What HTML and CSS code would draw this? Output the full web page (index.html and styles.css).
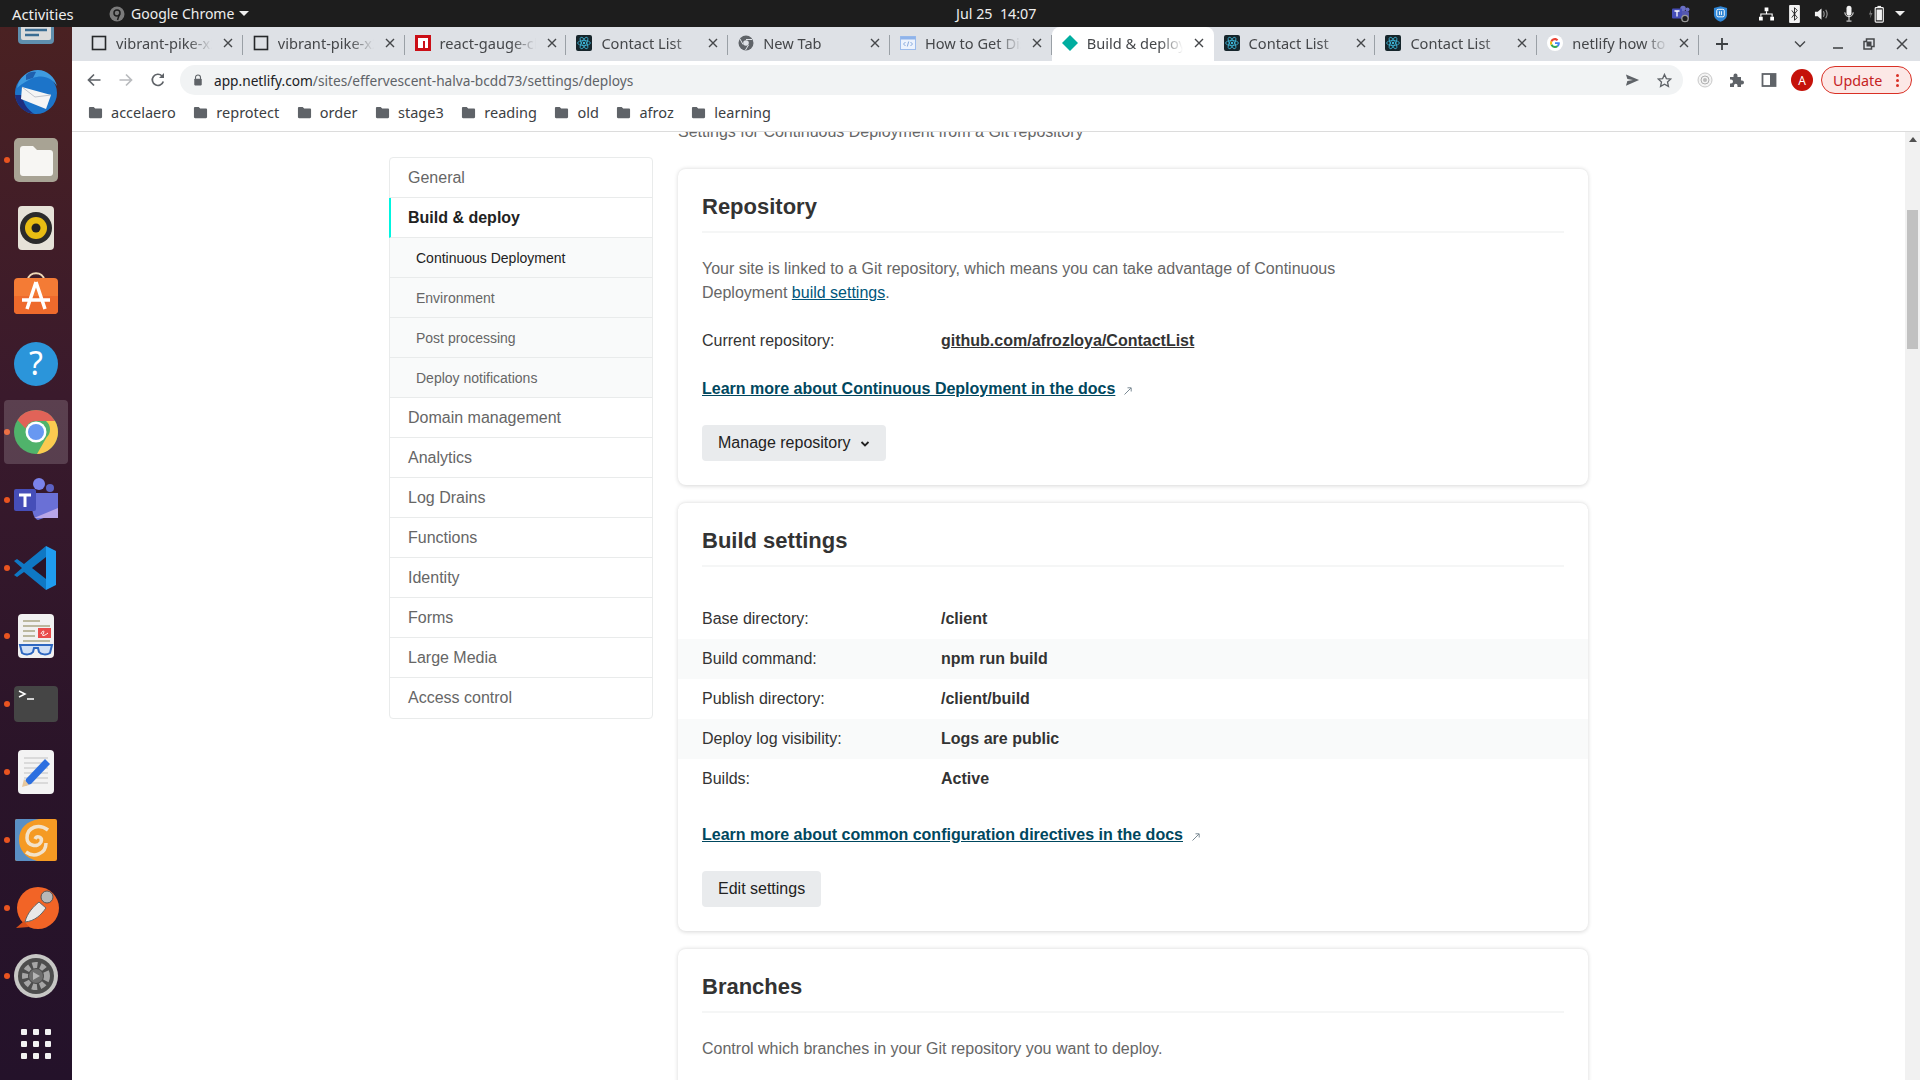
FILE: index.html
```html
<!DOCTYPE html>
<html lang="en">
<head>
  <meta charset="UTF-8">
  <title>Build &amp; deploy</title>
  <link rel="stylesheet" href="styles.css">
</head>
<body>
  <svg class="defs" width="0" height="0">
    <symbol id="react" viewBox="0 0 16 16">
      <rect width="16" height="16" rx="2" fill="#16252b"/>
      <g fill="none" stroke="#3fb6d8" stroke-width=".8">
        <ellipse cx="8" cy="8" rx="6.4" ry="2.5"/>
        <ellipse cx="8" cy="8" rx="6.4" ry="2.5" transform="rotate(60 8 8)"/>
        <ellipse cx="8" cy="8" rx="6.4" ry="2.5" transform="rotate(120 8 8)"/>
      </g>
      <circle cx="8" cy="8" r="1.2" fill="#3fb6d8"/>
    </symbol>
    <symbol id="blank" viewBox="0 0 16 16">
      <rect x="1.5" y="1.5" width="13" height="13" fill="none" stroke="#26282b" stroke-width="1.6"/>
    </symbol>
    <symbol id="close" viewBox="0 0 10 10">
      <path d="M1 1l8 8M9 1l-8 8" stroke="#45474a" stroke-width="1.4" fill="none"/>
    </symbol>
    <symbol id="folder" viewBox="0 0 16 16">
      <path d="M1 3.2C1 2.5 1.5 2 2.2 2h3.9l1.6 1.7h6.1c.7 0 1.2.5 1.2 1.2v7.9c0 .7-.5 1.2-1.2 1.2H2.2C1.500 14 1 13.500 1 12.800z" fill="#5f6368"/>
    </symbol>
    <symbol id="ext" viewBox="0 0 10 10">
      <path d="M1.500 8.500L8 2M4.500 1.800H8.200V5.500" fill="none" stroke="#7b8a94" stroke-width="1"/>
    </symbol>
  </svg>

  <div class="topbar">
    <div class="topbar-left">
      <span class="activities">Activities</span>
      <svg class="app-icon" viewBox="0 0 16 16"><circle cx="8" cy="8" r="7.500" fill="#7b7b7b"/><circle cx="8" cy="7" r="3" fill="none" stroke="#1d1d1d" stroke-width="1.500"/><path d="M10.500 8l-2 6" stroke="#1d1d1d" stroke-width="1.500"/></svg>
      <span class="app-name">Google Chrome</span>
      <span class="caret"></span>
    </div>
    <div class="clock">Jul 25&nbsp;&nbsp;14:07</div>
    <div class="status">
      <svg class="st-teams" viewBox="0 0 18 18"><circle cx="11" cy="3.500" r="2.800" fill="#6a6fc4"/><circle cx="15.500" cy="4.500" r="2" fill="#6a6fc4"/><rect x="8" y="6" width="9" height="8" rx="2" fill="#5558af"/><rect x="0" y="3.500" width="10" height="10" rx="1" fill="#464eb8"/><path d="M2.500 6h5M5 6v5.500" stroke="#fff" stroke-width="1.300"/><circle cx="13" cy="13.500" r="3.200" fill="#1d1d1d" stroke="#999" stroke-width="1.300"/></svg>
      <svg class="st-shield" viewBox="0 0 16 18"><path d="M1 2.500L8 .8l7 1.700v7c0 4-3.500 6.500-7 7.700-3.500-1.200-7-3.700-7-7.700z" fill="#2f86d6"/><rect x="4" y="4" width="8" height="8" rx="1.500" fill="none" stroke="#fff" stroke-width="1"/><path d="M7 6v4M9 6v4" stroke="#fff" stroke-width="1"/></svg>
      <svg class="st-net" viewBox="0 0 16 16"><path d="M6 1h4v4H6zM0 11h4v4H0zM12 11h4v4h-4z" fill="#fff"/><path d="M8 5v3M2 11V8h12v3" fill="none" stroke="#fff" stroke-width="1.200"/></svg>
      <svg class="st-bt" viewBox="0 0 12 20"><rect width="12" height="20" rx="1" fill="#f2f2f2"/><path d="M3 6l6 8-3 3V3l3 3-6 8" fill="none" stroke="#1d1d1d" stroke-width="1"/></svg>
      <svg class="st-vol" viewBox="0 0 16 16"><path d="M1 5.500h3L8 2v12l-4-3.500H1z" fill="#f2f2f2"/><path d="M10 5c1 1.800 1 4.200 0 6M12.500 3.500c1.800 2.700 1.800 6.300 0 9" fill="none" stroke="#9a9a9a" stroke-width="1.200"/></svg>
      <svg class="st-mic" viewBox="0 0 12 20"><rect x="3" y="0" width="6" height="12" rx="3" fill="#f2f2f2"/><path d="M1 8c0 7 10 7 10 0M6 13v5M3 18.500h6" fill="none" stroke="#f2f2f2" stroke-width="1.200"/></svg>
      <svg class="st-bat" viewBox="0 0 20 20"><path d="M3.500 5L1 10.500h2L2 15l3-6H3z" fill="#777"/><rect x="8" y="3" width="9" height="16" rx="1" fill="none" stroke="#f2f2f2" stroke-width="1.300"/><rect x="10.500" y="1" width="4" height="2" fill="#f2f2f2"/><rect x="9.500" y="5" width="6" height="12" fill="#f2f2f2"/></svg>
      <span class="caret"></span>
    </div>
  </div>

  <div class="desktop">
    <div class="dock">
      <div class="dock-list">
        <div class="dock-item">
          <svg viewBox="0 0 48 48"><rect x="6" y="4" width="36" height="40" rx="4" fill="#5f8fae"/><rect x="9" y="7" width="30" height="33" rx="2" fill="#dcdcdc"/><path d="M13 24h22M13 30h22M13 35h14" stroke="#3b6d93" stroke-width="2.500"/></svg>
        </div>
        <div class="dock-item">
          <svg viewBox="0 0 48 48"><circle cx="24" cy="25" r="21" fill="#1c74c9"/><path d="M5 20C7 9 16 2 26 2c9 0 17 7 19 16-5-8-14-12-24-8-5 2-10 5-16 10z" fill="#3f9be0"/><path d="M14 7c2-3 7-4 10-3l-3 6-7 2z" fill="#1e5fae"/><path d="M3 27c1 10 9 18 19 19-7-5-11-11-12-19z" fill="#1d2f80"/><path d="M10 19l29 8-5 14-25-10z" fill="#f5f5f5"/><path d="M10 19l13 10 16-2" fill="none" stroke="#c0c4cc" stroke-width="1"/></svg>
        </div>
        <div class="dock-item running">
          <svg viewBox="0 0 48 48"><rect x="2" y="2" width="44" height="44" rx="5" fill="#a8a394"/><path d="M8 13c0-1.700 1.300-3 3-3h10l4 4h13c1.700 0 3 1.300 3 3v20c0 1.700-1.300 3-3 3H11c-1.700 0-3-1.300-3-3z" fill="#f7f6f3"/></svg>
        </div>
        <div class="dock-item">
          <svg viewBox="0 0 48 48"><rect x="6" y="2" width="36" height="44" rx="4" fill="#e6e2d8"/><circle cx="24" cy="24" r="16" fill="#2b2b2b"/><circle cx="24" cy="24" r="11" fill="#e8bd13"/><circle cx="24" cy="24" r="4.500" fill="#222"/></svg>
        </div>
        <div class="dock-item">
          <svg viewBox="0 0 48 48"><path d="M16 8c0-9 16-9 16 0" fill="none" stroke="#f0d9b8" stroke-width="2"/><rect x="2" y="6" width="44" height="36" rx="4" fill="#f47b35"/><path d="M2 24h44v14a4 4 0 0 1-4 4H6a4 4 0 0 1-4-4z" fill="#ee6a2c"/><path d="M24 10l-9 27M24 10l9 27M10 28h28" fill="none" stroke="#fff" stroke-width="3.500"/></svg>
        </div>
        <div class="dock-item">
          <svg viewBox="0 0 48 48"><circle cx="24" cy="24" r="22" fill="#2b95da"/><text x="24" y="35" text-anchor="middle" class="dock-glyph">?</text></svg>
        </div>
        <div class="dock-item running focused">
          <svg viewBox="0 0 48 48"><circle cx="24" cy="24" r="22" fill="#2da44e"/><path d="M24 2a22 22 0 0 1 19 11H24a11 11 0 0 0-10.500 7.500L5.500 12A22 22 0 0 1 24 2z" fill="#db4437"/><path d="M43 13a22 22 0 0 1-18 33l9.500-16.500A11 11 0 0 0 34 13z" fill="#fbc02d"/><circle cx="24" cy="24" r="10.500" fill="#fff"/><circle cx="24" cy="24" r="8" fill="#4a84ee"/></svg>
        </div>
        <div class="dock-item running">
          <svg viewBox="0 0 48 48"><circle cx="27" cy="8" r="6" fill="#7b83eb"/><circle cx="38" cy="12" r="4" fill="#5c62c4"/><path d="M20 17h26v20L26 44c-4-1-6-8-6-14z" fill="#6a70d6"/><path d="M46 32v10H22z" fill="#b9a6e8"/><rect x="2" y="13" width="22" height="22" rx="2" fill="#464eb8"/><path d="M7 19h12M13 19v12" stroke="#fff" stroke-width="3"/></svg>
        </div>
        <div class="dock-item running">
          <svg viewBox="0 0 48 48"><path d="M34 2l10 5v34l-10 5z" fill="#1f9cf0"/><path d="M34 2v44L12 28l-7 5-3-2 8-7-8-7 3-2 7 5z" fill="#0f78c4"/><path d="M34 13L20 24l14 11z" fill="#2a1428"/></svg>
        </div>
        <div class="dock-item running">
          <svg viewBox="0 0 48 48"><rect x="6" y="2" width="36" height="44" rx="4" fill="#f1f1f1"/><path d="M11 9h17M11 14h27M11 19h12M11 24h12M11 29h27" stroke="#bbb89f" stroke-width="2"/><rect x="26" y="16" width="13" height="10" fill="#e94b4b"/><path d="M29 22c2-5 4-3 2 0s3 1 5-1" fill="none" stroke="#fff" stroke-width="1"/><path d="M8 33h32l-2 8c-3 2-9 2-11-1l-1-4h-4l-1 4c-2 3-8 3-11 1z" fill="#cfdff5" stroke="#2d67c0" stroke-width="2"/></svg>
        </div>
        <div class="dock-item running">
          <svg viewBox="0 0 48 48"><rect x="2" y="6" width="44" height="36" rx="4" fill="#454545"/><path d="M7 11l6 3-6 3" fill="none" stroke="#fff" stroke-width="1.500"/><path d="M15 19h7" stroke="#fff" stroke-width="1.500"/></svg>
        </div>
        <div class="dock-item running">
          <svg viewBox="0 0 48 48"><rect x="6" y="2" width="36" height="44" rx="4" fill="#f3f3f3"/><path d="M12 10h24M12 15h24M12 20h24M12 25h24M12 30h24M12 35h24" stroke="#d2d2d2" stroke-width="1.500"/><path d="M33 11l5 5-19 20-7 2 2-7z" fill="#2c6fe0"/><path d="M12 31l-2 8 7-2z" fill="#e7c79c"/></svg>
        </div>
        <div class="dock-item running">
          <svg viewBox="0 0 48 48"><rect x="3" y="3" width="42" height="42" rx="2" fill="#f59a23"/><path d="M3 5a2 2 0 0 1 2-2h22C15 5 7 12 7 24c0 9 6 18 18 21H5a2 2 0 0 1-2-2z" fill="#5a8fc4"/><path d="M36 14c-9-7-21-3-21 8 0 8 11 10 14 4 2-5-4-7-6-3M14 36c8 6 20 2 20-9" fill="none" stroke="#f3e2c8" stroke-width="3.500"/></svg>
        </div>
        <div class="dock-item running">
          <svg viewBox="0 0 48 48"><circle cx="26" cy="24" r="21" fill="#f26426"/><path d="M4 44l8-7 5 6z" fill="#d94f1a"/><path d="M13 38c2-9 9-16 14-20l7 6c-5 7-11 13-21 14z" fill="#e8e8e8" stroke="#666" stroke-width="1"/><circle cx="35" cy="13" r="6" fill="#b8b8b8" stroke="#555" stroke-width="1"/></svg>
        </div>
        <div class="dock-item running">
          <svg viewBox="0 0 48 48"><circle cx="24" cy="24" r="22" fill="#c7c7c5"/><circle cx="24" cy="24" r="18" fill="#4d4d4d"/><circle cx="24" cy="24" r="11" fill="none" stroke="#a6a6a6" stroke-width="6" stroke-dasharray="5 3"/><circle cx="24" cy="24" r="7" fill="#6e6e6e"/><path d="M21 20l7 4-7 4z" fill="#b5b5b5"/></svg>
        </div>
        <div class="dock-item">
          <div class="app-grid">
            <i></i><i></i><i></i><i></i><i></i><i></i><i></i><i></i><i></i>
          </div>
        </div>
      </div>
    </div>

    <div class="window">
      <div class="tabstrip">
        <div class="tab"><svg class="fav"><use href="#blank"/></svg><span class="tab-title">vibrant-pike-x2b1c</span><svg class="tab-x"><use href="#close"/></svg></div>
        <div class="tab"><svg class="fav"><use href="#blank"/></svg><span class="tab-title">vibrant-pike-x2b1c</span><svg class="tab-x"><use href="#close"/></svg></div>
        <div class="tab"><svg class="fav" viewBox="0 0 16 16"><rect width="16" height="16" fill="#cb0f17"/><path d="M3 3h10v10h-3V6H8v7H3z" fill="#fff"/></svg><span class="tab-title">react-gauge-chart</span><svg class="tab-x"><use href="#close"/></svg></div>
        <div class="tab"><svg class="fav"><use href="#react"/></svg><span class="tab-title">Contact List</span><svg class="tab-x"><use href="#close"/></svg></div>
        <div class="tab"><svg class="fav" viewBox="0 0 16 16"><circle cx="8" cy="8" r="7.500" fill="#5f6368"/><circle cx="8" cy="8" r="2.800" fill="#dee1e6"/><path d="M8 4.500h6M5 9.500L2 4M10.500 10L7.500 15" stroke="#dee1e6" stroke-width="1"/></svg><span class="tab-title">New Tab</span><svg class="tab-x"><use href="#close"/></svg></div>
        <div class="tab"><svg class="fav" viewBox="0 0 16 16"><rect x=".5" y="1.500" width="15" height="13" fill="#edf3fd" stroke="#9dbcec"/><rect x=".5" y="1.500" width="15" height="3" fill="#8fb3ea"/><path d="M5.500 7L3.500 9l2 2M10.500 7l2 2-2 2M8.700 6.500l-1.400 5" fill="none" stroke="#6d94d2" stroke-width=".8"/></svg><span class="tab-title">How to Get Distinct</span><svg class="tab-x"><use href="#close"/></svg></div>
        <div class="tab active"><svg class="fav" viewBox="0 0 16 16"><path d="M8 0l8 8-8 8-8-8z" fill="#00ad9f"/></svg><span class="tab-title">Build &amp; deploy | eff</span><svg class="tab-x"><use href="#close"/></svg></div>
        <div class="tab"><svg class="fav"><use href="#react"/></svg><span class="tab-title">Contact List</span><svg class="tab-x"><use href="#close"/></svg></div>
        <div class="tab"><svg class="fav"><use href="#react"/></svg><span class="tab-title">Contact List</span><svg class="tab-x"><use href="#close"/></svg></div>
        <div class="tab"><svg class="fav" viewBox="0 0 16 16"><circle cx="8" cy="8" r="8" fill="#fff"/><path d="M12.800 8.200c0-.4 0-.7-.1-1H8v1.900h2.700c-.2.700-.5 1.200-1 1.500l1.500 1.200c1-.9 1.600-2.200 1.600-3.600z" fill="#4285f4"/><path d="M8 13c1.300 0 2.400-.4 3.200-1.200l-1.500-1.200c-.4.300-1 .5-1.700.5-1.300 0-2.400-.9-2.800-2L3.600 10.300C4.400 11.900 6.100 13 8 13z" fill="#34a853"/><path d="M5.200 9.100c-.2-.7-.2-1.500 0-2.200L3.600 5.700c-.7 1.400-.7 3.200 0 4.600z" fill="#fbbc05"/><path d="M8 5.200c.7 0 1.400.3 1.900.7l1.400-1.400C10.400 3.600 9.300 3 8 3 6.100 3 4.400 4.100 3.600 5.700l1.600 1.200c.4-1 1.500-1.700 2.800-1.700z" fill="#ea4335"/></svg><span class="tab-title">netlify how to deploy</span><svg class="tab-x"><use href="#close"/></svg></div>
        <svg class="plus" viewBox="0 0 14 14"><path d="M7 1v12M1 7h12" stroke="#3c4043" stroke-width="1.800"/></svg>
        <svg class="chev" viewBox="0 0 12 8"><path d="M1 1.500l5 5 5-5" fill="none" stroke="#45474a" stroke-width="1.400"/></svg>
        <svg class="win-min" viewBox="0 0 12 12"><path d="M1 10h10" stroke="#45474a" stroke-width="1.600"/></svg>
        <svg class="win-max" viewBox="0 0 12 12"><path d="M3.500 1h7.500v7.500H8.500V11H1V3.500h2.500z" fill="none" stroke="#45474a" stroke-width="1.500"/><rect x="3.500" y="3.500" width="5" height="5" fill="#45474a"/></svg>
        <svg class="win-x" viewBox="0 0 12 12"><path d="M1 1l10 10M11 1L1 11" stroke="#45474a" stroke-width="1.500"/></svg>
      </div>

      <div class="toolbar">
        <div class="nav">
          <svg viewBox="0 0 16 16"><path d="M14.500 8H2.500M8 2.500L2.500 8 8 13.500" fill="none" stroke="#5f6368" stroke-width="1.700"/></svg>
          <svg viewBox="0 0 16 16"><path d="M1.500 8h12M8 2.500L13.500 8 8 13.500" fill="none" stroke="#b9bbbe" stroke-width="1.700"/></svg>
          <svg viewBox="0 0 16 16"><path d="M13.300 9.500A5.600 5.600 0 1 1 12 4" fill="none" stroke="#5f6368" stroke-width="1.700"/><path d="M14 1v5H9z" fill="#5f6368"/></svg>
        </div>
        <div class="omnibox">
          <svg class="lock" viewBox="0 0 12 14"><path d="M3 6V4a3 3 0 0 1 6 0v2" fill="none" stroke="#5f6368" stroke-width="1.300"/><rect x="1.500" y="5.500" width="9" height="8" rx="1" fill="#5f6368"/></svg>
          <span class="url"><b>app.netlify.com</b>/sites/effervescent-halva-bcdd73/settings/deploys</span>
          <svg class="send" viewBox="0 0 16 14"><path d="M1 1l14 6-14 6 1.500-5 6-1-6-1z" fill="#5f6368"/></svg>
          <svg class="star" viewBox="0 0 16 16"><path d="M8 1.500l2 4.400 4.700.5-3.500 3.200 1 4.700L8 11.900l-4.200 2.400 1-4.700-3.500-3.200 4.700-.5z" fill="none" stroke="#5f6368" stroke-width="1.400"/></svg>
        </div>
        <div class="ext-icons">
          <svg viewBox="0 0 16 16"><circle cx="8" cy="8" r="7" fill="#f4f4f4" stroke="#c9c9c9"/><circle cx="8" cy="8" r="4" fill="none" stroke="#b0b0b0"/><circle cx="8" cy="8" r="2" fill="#bbb"/></svg>
          <svg viewBox="0 0 16 16"><path d="M1 5h3.500V3.500a2 2 0 0 1 4 0V5H12v3.500h1a2 2 0 0 1 0 4h-1V15H8.500v-1.500a1.700 1.700 0 0 0-3.500 0V15H1v-3.500h1a2 2 0 0 0 0-4H1z" fill="#5f6368"/></svg>
          <svg viewBox="0 0 16 16"><rect x="1.500" y="2" width="13" height="12" fill="none" stroke="#5f6368" stroke-width="1.800"/><rect x="9" y="2" width="5" height="12" fill="#5f6368"/></svg>
          <span class="avatar">A</span>
          <div class="update">Update<span class="dots"><i></i><i></i><i></i></span></div>
        </div>
      </div>

      <div class="bookmarks">
        <span class="bm"><svg><use href="#folder"/></svg>accelaero</span>
        <span class="bm"><svg><use href="#folder"/></svg>reprotect</span>
        <span class="bm"><svg><use href="#folder"/></svg>order</span>
        <span class="bm"><svg><use href="#folder"/></svg>stage3</span>
        <span class="bm"><svg><use href="#folder"/></svg>reading</span>
        <span class="bm"><svg><use href="#folder"/></svg>old</span>
        <span class="bm"><svg><use href="#folder"/></svg>afroz</span>
        <span class="bm"><svg><use href="#folder"/></svg>learning</span>
      </div>

      <div class="viewport">
        <div class="page">
          <nav class="sidebar">
            <a class="side-item">General</a>
            <a class="side-item current">Build &amp; deploy</a>
            <a class="side-item sub selected">Continuous Deployment</a>
            <a class="side-item sub">Environment</a>
            <a class="side-item sub">Post processing</a>
            <a class="side-item sub">Deploy notifications</a>
            <a class="side-item">Domain management</a>
            <a class="side-item">Analytics</a>
            <a class="side-item">Log Drains</a>
            <a class="side-item">Functions</a>
            <a class="side-item">Identity</a>
            <a class="side-item">Forms</a>
            <a class="side-item">Large Media</a>
            <a class="side-item">Access control</a>
          </nav>

          <main class="content">
            <p class="lead">Settings for Continuous Deployment from a Git repository</p>

            <section class="card">
              <h2>Repository</h2>
              <p class="desc">Your site is linked to a Git repository, which means you can take advantage of Continuous Deployment <a class="inline-link">build settings</a>.</p>
              <div class="line"><span class="key">Current repository:</span><a class="val repo">github.com/afrozloya/ContactList</a></div>
              <p class="docs"><a>Learn more about Continuous Deployment in the docs</a><svg class="ext-arrow"><use href="#ext"/></svg></p>
              <button class="btn">Manage repository<svg viewBox="0 0 10 8"><path d="M1.500 2L5 5.500 8.500 2" fill="none" stroke="#222" stroke-width="1.800"/></svg></button>
            </section>

            <section class="card">
              <h2>Build settings</h2>
              <div class="rows">
                <div class="line"><span class="key">Base directory:</span><span class="val">/client</span></div>
                <div class="line"><span class="key">Build command:</span><span class="val">npm run build</span></div>
                <div class="line"><span class="key">Publish directory:</span><span class="val">/client/build</span></div>
                <div class="line"><span class="key">Deploy log visibility:</span><span class="val">Logs are public</span></div>
                <div class="line"><span class="key">Builds:</span><span class="val">Active</span></div>
              </div>
              <p class="docs"><a>Learn more about common configuration directives in the docs</a><svg class="ext-arrow"><use href="#ext"/></svg></p>
              <button class="btn">Edit settings</button>
            </section>

            <section class="card">
              <h2>Branches</h2>
              <p class="desc">Control which branches in your Git repository you want to deploy.</p>
            </section>
          </main>
        </div>

        <div class="scrollbar">
          <span class="scroll-up"></span>
          <span class="scroll-thumb"></span>
        </div>
      </div>
    </div>
  </div>
</body>
</html>
```

FILE: styles.css
```css
* {
  box-sizing: border-box;
}
html, body {
  height: 100%;
}
body {
  margin: 0;
  width: 1920px;
  height: 1080px;
  overflow: hidden;
  display: flex;
  flex-direction: column;
  font-family: "Liberation Sans", Arial, sans-serif;
  font-size: 16px;
  color: #666;
  background: #fff;
}
.defs {
  position: absolute;
}

/* ubuntu top bar */
.topbar {
  height: 27px;
  flex: none;
  display: flex;
  align-items: center;
  background: #1d1d1d;
  color: #eee;
  font-family: "Noto Sans", sans-serif;
  font-size: 14px;
}
.topbar-left {
  width: 956px;
  display: flex;
  align-items: center;
  padding-left: 12px;
}
.activities {
  width: 97px;
  font-size: 14.8px;
}
.app-icon {
  width: 16px;
  height: 16px;
  margin-right: 6px;
}
.app-name {
  margin-right: 5px;
}
.caret {
  width: 0;
  height: 0;
  border: 5px solid transparent;
  border-top: 5px solid #eee;
  border-bottom: 0;
}
.clock {
  width: 82px;
  white-space: nowrap;
  font-size: 14.3px;
  padding-bottom: 1px;
}
.status {
  margin-left: auto;
  display: flex;
  align-items: center;
  padding-right: 15px;
}
.status svg {
  height: 18px;
}
.st-teams { width: 18px; margin-right: 23px; }
.st-shield { width: 15px; margin-right: 31px; }
.st-net { width: 15px; margin-right: 15px; }
.st-bt { width: 11px; margin-right: 14px; }
.st-vol { width: 15px; margin-right: 15px; }
.st-mic { width: 10px; margin-right: 14px; }
.st-bat { width: 18px; margin-right: 9px; }

/* dock */
.desktop {
  flex: 1;
  display: flex;
  min-height: 0;
}
.dock {
  width: 72px;
  flex: none;
  overflow: hidden;
  background: linear-gradient(180deg, #4a2122 0, #3a1a2c 35%, #2a1429 70%, #24122a 100%);
}
.dock-list {
  margin-top: -37.2px;
}
.dock-item {
  position: relative;
  height: 68px;
  display: flex;
  align-items: center;
  justify-content: center;
}
.dock-item svg {
  width: 48px;
  height: 48px;
}
.dock-item.running::before {
  content: "";
  position: absolute;
  left: 4px;
  top: 50%;
  margin-top: -3px;
  width: 6px;
  height: 6px;
  border-radius: 50%;
  background: #e95420;
}
.dock-item.focused::after {
  content: "";
  position: absolute;
  left: 4px;
  top: 2px;
  width: 64px;
  height: 64px;
  border-radius: 4px;
  background: rgba(255, 255, 255, .17);
}
.dock-glyph {
  font-family: "Noto Sans", sans-serif;
  font-size: 32px;
  fill: #fff;
}
.app-grid {
  display: grid;
  grid-template-columns: repeat(3, 6px);
  gap: 6px;
}
.app-grid i {
  width: 6px;
  height: 6px;
  background: #f2f2f2;
  border-radius: 1px;
}

/* browser window */
.window {
  flex: 1;
  min-width: 0;
  display: flex;
  flex-direction: column;
}
.tabstrip {
  height: 34px;
  flex: none;
  display: flex;
  align-items: center;
  padding-left: 9px;
  background: #dee1e6;
  font-family: "Noto Sans", sans-serif;
  font-size: 14.6px;
  color: #45474a;
}
.tab {
  position: relative;
  width: 161.8px;
  height: 34px;
  flex: none;
  display: flex;
  align-items: center;
  padding-left: 10px;
  padding-bottom: 2px;
}
.tab::after {
  content: "";
  position: absolute;
  right: 0;
  top: 8px;
  height: 20px;
  width: 1px;
  background: #9aa0a6;
}
.tab.active {
  background: #fff;
  border-radius: 8px 8px 0 0;
}
.tab.active::after {
  display: none;
}
.fav {
  width: 16px;
  height: 16px;
  flex: none;
}
.tab-title {
  width: 100px;
  margin-left: 9px;
  overflow: hidden;
  white-space: nowrap;
  -webkit-mask-image: linear-gradient(90deg, #000 72%, transparent 96%);
  mask-image: linear-gradient(90deg, #000 72%, transparent 96%);
}
.tab-x {
  width: 10px;
  height: 10px;
  margin-left: 7px;
  flex: none;
}
.plus {
  width: 14px;
  height: 14px;
  margin-left: 16px;
}
.chev {
  width: 12px;
  height: 8px;
  margin-left: 65px;
}
.win-min, .win-max, .win-x {
  width: 12px;
  height: 12px;
}
.win-min { margin-left: 26px; }
.win-max { margin-left: 19px; }
.win-x { margin-left: 21px; }

.toolbar {
  height: 34px;
  flex: none;
  display: flex;
  align-items: center;
  padding-top: 4px;
  background: #fff;
}
.nav {
  display: flex;
  gap: 16px;
  padding-left: 14px;
  width: 108px;
}
.nav svg {
  width: 16px;
  height: 16px;
}
.omnibox {
  width: 1503px;
  height: 30px;
  display: flex;
  align-items: center;
  padding: 0 11px 0 13px;
  border-radius: 15px;
  background: #f1f3f4;
  font-family: "Noto Sans", sans-serif;
  font-size: 13.7px;
  color: #5f6368;
}
.lock {
  width: 10px;
  height: 12px;
  margin-right: 11px;
}
.url {
  flex: 1;
  white-space: nowrap;
}
.url b {
  font-weight: 400;
  color: #202124;
}
.send {
  width: 15px;
  height: 14px;
  margin-right: 17px;
}
.star {
  width: 15px;
  height: 15px;
}
.ext-icons {
  display: flex;
  align-items: center;
  padding-left: 14px;
}
.ext-icons svg {
  width: 16px;
  height: 16px;
  margin-right: 16px;
}
.avatar {
  width: 22px;
  height: 22px;
  margin-left: -2px;
  border-radius: 50%;
  background: #c5120a;
  color: #fff;
  font-family: "Noto Sans", sans-serif;
  font-size: 12px;
  display: flex;
  align-items: center;
  justify-content: center;
}
.update {
  width: 91px;
  height: 28px;
  margin-left: 8px;
  display: flex;
  align-items: center;
  padding-left: 11px;
  border: 1px solid #d93025;
  border-radius: 14px;
  background: #fce8e6;
  color: #c5221f;
  font-family: "Noto Sans", sans-serif;
  font-size: 14.3px;
}
.dots {
  display: flex;
  flex-direction: column;
  gap: 2px;
  margin-left: 14px;
}
.dots i {
  width: 3px;
  height: 3px;
  border-radius: 50%;
  background: #d93025;
}

.bookmarks {
  height: 37px;
  flex: none;
  display: flex;
  align-items: center;
  gap: 17.6px;
  padding-left: 16px;
  padding-bottom: 2px;
  border-bottom: 1px solid #dcdcdc;
  background: #fff;
  font-family: "Noto Sans", sans-serif;
  font-size: 14.5px;
  color: #3c4043;
}
.bm {
  display: flex;
  align-items: center;
  gap: 8px;
}
.bm svg {
  width: 15px;
  height: 15px;
}

/* page */
.viewport {
  flex: 1;
  min-height: 0;
  display: flex;
}
.page {
  flex: 1;
  min-width: 0;
  overflow: hidden;
  display: flex;
  align-items: flex-start;
  padding-left: 317px;
}
.sidebar {
  width: 264px;
  flex: none;
  margin-top: 25px;
  margin-right: 25px;
  border: 1px solid #e9ebeb;
  border-radius: 4px;
  background: #fff;
}
.side-item {
  height: 40px;
  display: flex;
  align-items: center;
  padding-left: 18px;
  border-bottom: 1px solid #e9ebeb;
}
.side-item:last-child {
  border-bottom: 0;
}
.side-item.current {
  border-left: 2px solid #00f5e0;
  margin-left: -1px;
  padding-left: 17px;
  font-weight: 700;
  color: #222;
}
.side-item.sub {
  padding-left: 26px;
  background: #f9fafa;
  font-size: 14px;
}
.side-item.selected {
  color: #222;
}

.content {
  width: 910px;
  flex: none;
  margin-top: -12px;
  display: flex;
  flex-direction: column;
  gap: 17px;
}
.lead {
  margin: 0 0 7px;
  line-height: 24px;
}
.card {
  padding: 24px;
  border-top: 1px solid #eee;
  border-radius: 8px;
  background: #fff;
  box-shadow: 0 1px 4px rgba(0, 0, 0, .16);
}
h2 {
  margin: 0;
  padding: 1px 0 11px;
  border-bottom: 2px solid #f5f6f6;
  font-size: 22px;
  line-height: 26px;
  color: #333;
}
.desc {
  width: 680px;
  margin: 24px 0;
  line-height: 24px;
}
.inline-link {
  color: #00557a;
  text-decoration: underline;
}
.line {
  display: flex;
  align-items: center;
  line-height: 24px;
  color: #333;
}
.key {
  width: 239px;
  flex: none;
}
.val {
  font-weight: 700;
  color: #333;
}
.repo {
  text-decoration: underline;
}
.rows {
  margin: 32px -24px 0;
}
.rows .line {
  height: 40px;
  padding: 0 24px;
}
.rows .line:nth-child(even) {
  background: #f9fafa;
}
.docs {
  margin: 24px 0;
  line-height: 24px;
  display: flex;
  align-items: center;
}
.docs a {
  font-weight: 700;
  color: #00475e;
  text-decoration: underline;
}
.ext-arrow {
  width: 10px;
  height: 10px;
  margin-left: 8px;
  margin-top: 3px;
}
.btn {
  height: 36px;
  display: block;
  padding: 0 16px;
  border: 0;
  border-radius: 4px;
  background: #e9ebed;
  color: #222;
  font: inherit;
}
.btn svg {
  width: 10px;
  height: 8px;
  margin-left: 9px;
}

.scrollbar {
  width: 15px;
  flex: none;
  background: #f1f1f1;
  display: flex;
  flex-direction: column;
  align-items: center;
}
.scroll-up {
  width: 0;
  height: 0;
  margin-top: 5px;
  border: 4px solid transparent;
  border-bottom: 5px solid #505050;
  border-top: 0;
}
.scroll-thumb {
  width: 11px;
  height: 139px;
  margin-top: 68px;
  background: #c1c1c1;
}
```
